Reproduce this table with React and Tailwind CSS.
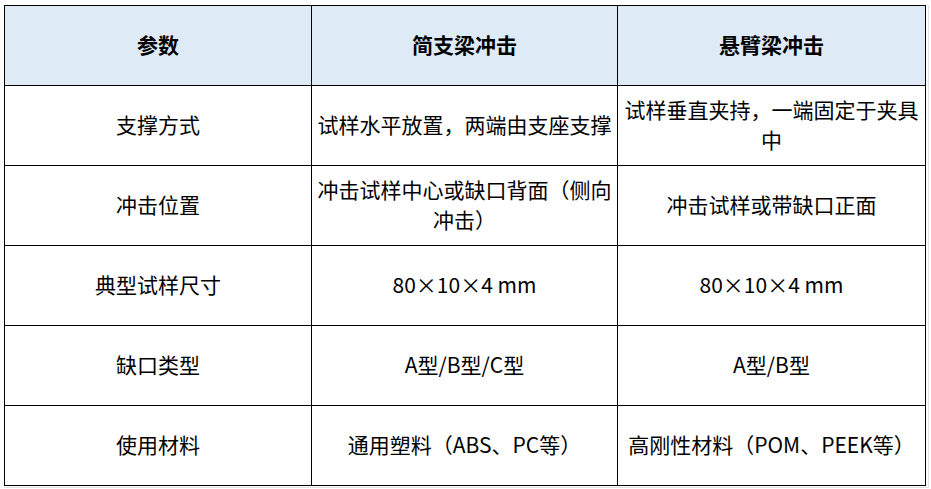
import React from "react";

const rows = [
  ["支撑方式", "试样水平放置，两端由支座支撑", "试样垂直夹持，一端固定于夹具中"],
  ["冲击位置", "冲击试样中心或缺口背面（侧向冲击）", "冲击试样或带缺口正面"],
  ["典型试样尺寸", "80×10×4 mm", "80×10×4 mm"],
  ["缺口类型", "A型/B型/C型", "A型/B型"],
  ["使用材料", "通用塑料（ABS、PC等）", "高刚性材料（POM、PEEK等）"],
];

const head = ["参数", "简支梁冲击", "悬臂梁冲击"];

const App = () => {
  const cell =
    "h-[80px] flex items-center justify-center text-center px-1 pb-1 border-r border-b border-black leading-[30px]";
  return (
    <div
      className="w-[931px] h-[489px] bg-white pt-[5px] pl-[4px] text-[21px] text-black"
      style={{ fontFamily: '"Noto Sans CJK SC", "Noto Sans", sans-serif' }}
    >
      <div className="w-[925px] pr-[2px] pb-[1px] border-r border-b border-[#e3e3e3]">
        <div className="grid grid-cols-[307px_306px_308px] w-[922px] border-l border-t border-black">
          {head.map((h) => (
            <div key={h} className={cell + " bg-[#deebf7] font-bold"}>
              {h}
            </div>
          ))}
          {rows.map((r) =>
            r.map((c, i) => (
              <div key={r[0] + i} className={cell}>
                {c}
              </div>
            ))
          )}
        </div>
      </div>
    </div>
  );
};

export default App;
